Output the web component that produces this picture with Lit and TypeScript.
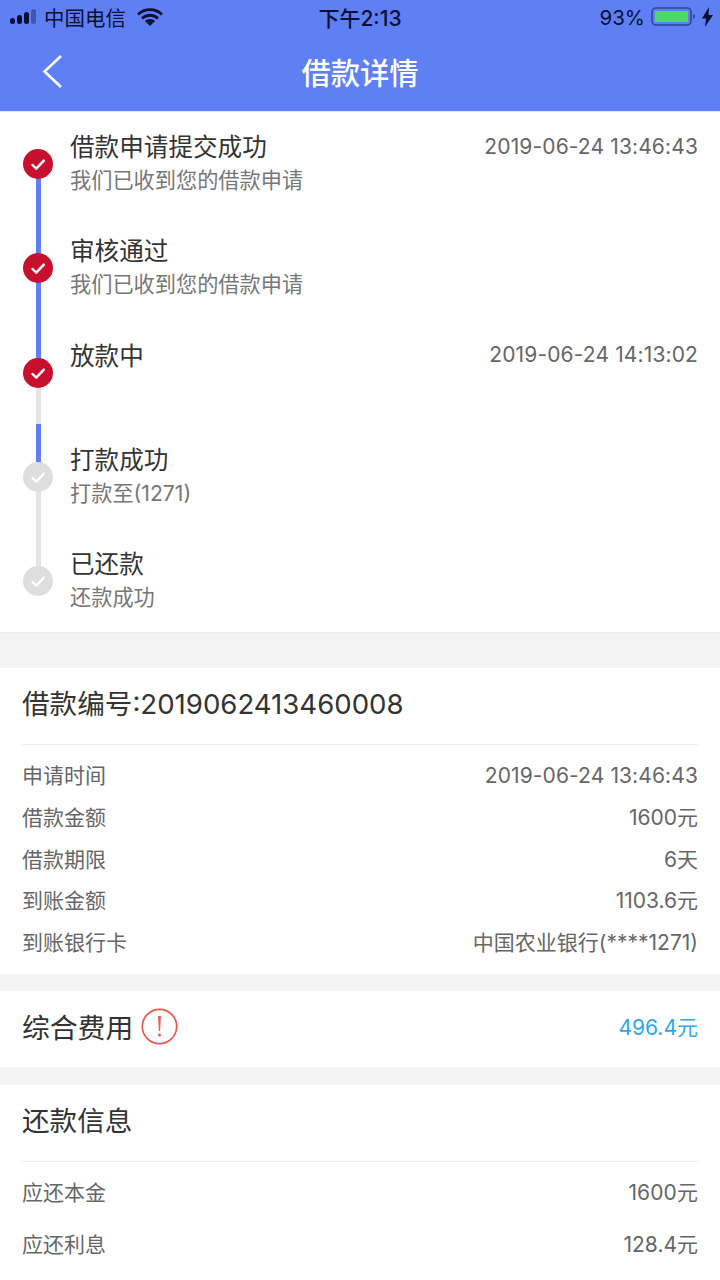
import { LitElement, html, css, svg } from 'lit';
import { customElement } from 'lit/decorators.js';

interface Step {
  title: string;
  sub?: string;
  time?: string;
  done: boolean;
  line?: 'blue' | 'gray' | 'split';
}

const STEPS: Step[] = [
  { title: '借款申请提交成功', sub: '我们已收到您的借款申请', time: '2019-06-24 13:46:43', done: true, line: 'blue' },
  { title: '审核通过', sub: '我们已收到您的借款申请', done: true, line: 'blue' },
  { title: '放款中', time: '2019-06-24 14:13:02', done: true, line: 'split' },
  { title: '打款成功', sub: '打款至(1271)', done: false, line: 'gray' },
  { title: '已还款', sub: '还款成功', done: false },
];

const LOAN_ROWS = [
  ['申请时间', '2019-06-24 13:46:43'],
  ['借款金额', '1600元'],
  ['借款期限', '6天'],
  ['到账金额', '1103.6元'],
  ['到账银行卡', '中国农业银行(****1271)'],
];

const REPAY_ROWS = [
  ['应还本金', '1600元'],
  ['应还利息', '128.4元'],
];

const check = svg`<path d="M9.500 16l3.800 3.600 7.500-8" fill="none" stroke="#fff" stroke-width="2.400" stroke-linecap="round" stroke-linejoin="round"/>`;

@customElement('app-root')
export class AppRoot extends LitElement {
  static styles = css`
    :host {
      display: block;
      height: 1280px;
      overflow: hidden;
      background: #f3f3f3;
      font-family: Inter, "Noto Sans CJK SC", sans-serif;
      color: #333;
    }

    .header {
      height: 111px;
      background: #5f7ff5;
      border-bottom: 1px solid #e4e8f6;
    }

    .status {
      height: 37px;
      box-sizing: border-box;
      padding: 0 10px 3px;
      display: grid;
      grid-template-columns: 1fr auto 1fr;
      align-items: center;
      color: #0a0f33;
      font-size: 20.5px;
    }

    .status-left, .status-right {
      display: flex;
      align-items: center;
    }

    .status-left { gap: 6px; }
    .status-right { justify-content: flex-end; gap: 6px; font-size: 20.5px; }
    .clock { font-size: 21px; font-weight: 500; }

    .nav {
      height: 70px;
      box-sizing: border-box;
      padding-bottom: 2px;
      display: flex;
      align-items: center;
      justify-content: center;
      position: relative;
      color: #fff;
      font-size: 29.3px;
      font-weight: 500;
    }

    .back {
      position: absolute;
      left: 41px;
      top: 17px;
    }

    .timeline {
      background: #fff;
      height: 521px;
      padding-top: 9px;
      box-sizing: border-box;
      border-bottom: 1px solid #eee;
    }

    .step {
      height: 104.3px;
      display: flex;
      position: relative;
    }

    .rail {
      width: 70px;
      flex: none;
      position: relative;
    }

    .dot {
      position: absolute;
      left: 23px;
      top: 28px;
      width: 30px;
      height: 30px;
      border-radius: 50%;
      z-index: 1;
    }

    .dot.on { background: #c8102e; }
    .dot.off { background: #dedede; }
    .dot svg { display: block; }

    .seg {
      position: absolute;
      left: 36px;
      width: 5px;
      top: 43px;
      height: 104.3px;
    }

    .seg.blue { background: #5f7ff5; }
    .seg.gray { background: #e4e4e4; }

    .seg.split {
      background: linear-gradient(#e4e4e4 0 51px, #5f7ff5 51px 100%);
    }

    .body {
      flex: 1;
      min-width: 0;
      padding: 6px 22px 0 0;
    }

    .line1 {
      display: flex;
      justify-content: space-between;
      align-items: center;
      height: 36px;
      font-size: 24.6px;
      color: #333;
    }

    .time {
      font-size: 21px;
      line-height: 32px;
      margin-top: 3px;
      letter-spacing: 0.13px;
      color: #666;
    }

    .sub {
      font-size: 21.2px;
      line-height: 32px;
      margin-top: 1px;
      color: #777;
    }

    .card {
      background: #fff;
      padding: 0 22px;
      margin-top: 35px;
    }

    .card-title {
      height: 77px;
      box-sizing: border-box;
      padding-bottom: 9px;
      display: flex;
      align-items: center;
      font-size: 27.6px;
      color: #333;
      border-bottom: 1px solid #eee;
    }

    .loan { height: 306px; box-sizing: border-box; }
    .loan .rows { padding-top: 10px; }

    .row {
      display: flex;
      justify-content: space-between;
      height: 41.8px;
      line-height: 41.8px;
      font-size: 21px;
      color: #666;
    }

    .row:first-child span:last-child { letter-spacing: 0.11px; }

    .fee {
      margin-top: 17px;
      height: 76px;
      box-sizing: border-box;
      padding-bottom: 7px;
      display: flex;
      align-items: center;
      justify-content: space-between;
    }

    .fee-label {
      display: flex;
      align-items: center;
      gap: 8px;
      font-size: 27.8px;
      color: #333;
    }

    .fee-label svg { margin-top: 2px; }

    .fee-value {
      font-size: 21px;
      color: #2ea7f0;
    }

    .repay { margin-top: 18px; padding-bottom: 40px; }
    .repay .rows { padding-top: 5px; }
    .repay .row { height: 52px; line-height: 52px; }
  `;

  render() {
    return html`
      <div class="header">
        <div class="status">
          <div class="status-left">
            <svg width="28" height="16" viewBox="0 0 28 16">
              <rect x="0" y="9" width="5" height="6" rx="2.5" fill="#0a0f33"/>
              <rect x="7" y="6" width="5" height="9" rx="2.5" fill="#0a0f33"/>
              <rect x="14" y="3" width="5" height="12" rx="2.5" fill="#0a0f33"/>
              <rect x="21" y="0" width="5" height="15" rx="2.5" fill="#3f56b0"/>
            </svg>
            <span>中国电信</span>
            <svg width="26" height="18" viewBox="0 0 26 18" style="margin-left:5px">
              <path d="M1 6.500a17 17 0 0 1 24 0M5 10.500a11.500 11.500 0 0 1 16 0M8.800 14a6 6 0 0 1 8.400 0" fill="none" stroke="#0a0f33" stroke-width="2.800"/>
              <path d="M13 18l-3-3a4.200 4.200 0 0 1 6 0z" fill="#0a0f33"/>
            </svg>
          </div>
          <div class="clock">下午2:13</div>
          <div class="status-right">
            <span>93%</span>
            <svg width="46" height="20" viewBox="0 0 46 20">
              <rect x="1" y="1" width="39" height="17" rx="4" fill="none" stroke="#33468f" stroke-width="1.600"/>
              <rect x="4" y="4" width="33" height="11" rx="1" fill="#4cd964"/>
              <path d="M42 7c1.500 .5 2 1.500 2 2.500s-.5 2-2 2.500z" fill="#33468f"/>
            </svg>
            <svg width="11" height="20" viewBox="0 0 11 20" style="margin-left:-1px;margin-right:-3px">
              <path d="M7 0L0 11.500h4L3 20l8-12H6.500z" fill="#0a0f33"/>
            </svg>
          </div>
        </div>
        <div class="nav">
          <svg class="back" width="22" height="36" viewBox="0 0 22 36">
            <path d="M20 2L3.500 17.500 20 33" fill="none" stroke="#fff" stroke-width="2.600"/>
          </svg>
          借款详情
        </div>
      </div>

      <div class="timeline">
        ${STEPS.map(
          (s) => html`
            <div class="step">
              <div class="rail">
                ${s.line ? html`<div class="seg ${s.line}"></div>` : ''}
                <div class="dot ${s.done ? 'on' : 'off'}">
                  <svg width="30" height="30" viewBox="0 0 30 30">${check}</svg>
                </div>
              </div>
              <div class="body">
                <div class="line1">
                  <span>${s.title}</span>
                  ${s.time ? html`<span class="time">${s.time}</span>` : ''}
                </div>
                ${s.sub ? html`<div class="sub">${s.sub}</div>` : ''}
              </div>
            </div>
          `
        )}
      </div>

      <div class="card loan">
        <div class="card-title">借款编号:2019062413460008</div>
        <div class="rows">
          ${LOAN_ROWS.map(([k, v]) => html`<div class="row"><span>${k}</span><span>${v}</span></div>`)}
        </div>
      </div>

      <div class="card fee">
        <div class="fee-label">
          综合费用
          <svg width="37" height="37" viewBox="0 0 37 37">
            <circle cx="18.500" cy="18.500" r="17.200" fill="none" stroke="#e8574c" stroke-width="1.700"/>
            <path d="M17.100 8h2.800l-.8 15h-1.200z" fill="#e8574c"/>
            <circle cx="18.500" cy="27" r="1.500" fill="#e8574c"/>
          </svg>
        </div>
        <span class="fee-value">496.4元</span>
      </div>

      <div class="card repay">
        <div class="card-title">还款信息</div>
        <div class="rows">
          ${REPAY_ROWS.map(([k, v]) => html`<div class="row"><span>${k}</span><span>${v}</span></div>`)}
        </div>
      </div>
    `;
  }
}

declare global {
  interface HTMLElementTagNameMap {
    'app-root': AppRoot;
  }
}
